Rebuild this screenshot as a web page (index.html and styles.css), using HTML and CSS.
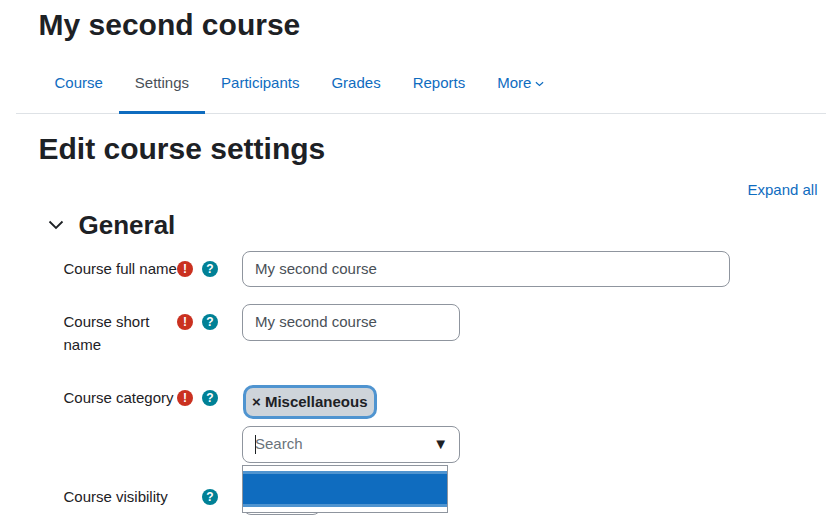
FILE: index.html
```html
<!DOCTYPE html>
<html lang="en">
<head>
<meta charset="utf-8">
<title>Edit course settings</title>
<link rel="stylesheet" href="styles.css">
</head>
<body>
<div class="page">
  <h1 class="course-title">My second course</h1>
  <nav class="tabs">
    <a class="tab" href="#">Course</a>
    <a class="tab active" href="#">Settings</a>
    <a class="tab" href="#">Participants</a>
    <a class="tab" href="#">Grades</a>
    <a class="tab" href="#">Reports</a>
    <a class="tab" href="#">More <svg class="caret" viewBox="0 0 10 6" width="9" height="6"><path d="M1 1l4 3.6L9 1" fill="none" stroke="currentColor" stroke-width="1.3"/></svg></a>
  </nav>
  <main class="content">
    <h2 class="page-title">Edit course settings</h2>
    <div class="expand-row"><a href="#">Expand all</a></div>
    <div class="section-head">
      <svg class="chevron" viewBox="0 0 16 10" width="16" height="10"><path d="M1.5 1.5L8 8l6.500-6.500" fill="none" stroke="#1d2125" stroke-width="1.800"/></svg>
      <h3 class="section-title">General</h3>
    </div>
    <div class="form-row row-full">
      <div class="label-col"><span class="label">Course full name</span><span class="icons"><span class="badge req">!</span><span class="badge help">?</span></span></div>
      <div class="field"><input class="text-input wide" value="My second course"></div>
    </div>
    <div class="form-row row-short">
      <div class="label-col"><span class="label">Course short name</span><span class="icons"><span class="badge req">!</span><span class="badge help">?</span></span></div>
      <div class="field"><input class="text-input narrow" value="My second course"></div>
    </div>
    <div class="form-row row-cat">
      <div class="label-col"><span class="label">Course category</span><span class="icons"><span class="badge req">!</span><span class="badge help">?</span></span></div>
      <div class="field">
        <div class="chip"><span class="chip-x">×</span> Miscellaneous</div>
        <div class="search-box"><span class="cursor"></span><span class="placeholder">Search</span><span class="arrow">▼</span></div>
        <div class="dropdown"><div class="option"></div></div>
      </div>
    </div>
    <div class="form-row row-vis">
      <div class="label-col"><span class="label">Course visibility</span><span class="icons"><span class="badge help">?</span></span></div>
      <div class="field"><div class="select-stub"></div></div>
    </div>
  </main>
</div>
</body>
</html>
```
FILE: styles.css
```css
html, body { margin: 0; padding: 0; height: 522px; overflow: hidden; background: #fff; }
body { font-family: "Liberation Sans", Arial, sans-serif; font-size: 15px; color: #1d2125; line-height: 22.5px; }
a { color: #0f6cbf; text-decoration: none; }
.page { padding: 0 8.5px 0 16px; }
.course-title { margin: 0; padding: 7px 0 0 22.5px; font-size: 30px; line-height: 36px; font-weight: 700; height: 36px; }
.tabs { display: flex; padding: 7px 0 0 22.5px; box-sizing: border-box; height: 71px; border-bottom: 1px solid #dee2e6; margin-right: -8.5px; align-items: flex-start; }
.tab { padding: 6px 16px 0; display: flex; align-items: center; gap: 4px; height: 64px; box-sizing: border-box; border-bottom: 3px solid transparent; }
.tab.active { color: #495057; border-bottom-color: #0f6cbf; }
.caret { margin-top: 1px; }
.content { padding-left: 22.5px; }
.page-title { margin: 0; padding-top: 17px; font-size: 30px; line-height: 36px; font-weight: 700; }
.expand-row { text-align: right; margin-top: 12px; height: 22px; }
.section-head { display: flex; align-items: center; margin-top: 6px; height: 36px; }
.chevron { margin-left: 9px; margin-right: 15px; }
.section-title { margin: 0; font-size: 26px; line-height: 32px; font-weight: 700; }
.form-row { display: flex; }
.label-col { width: 178.5px; margin-left: 25px; display: flex; justify-content: space-between; flex: none; position: relative; }
.label { display: block; width: 114px; }
.row-full .label, .row-cat .label, .row-vis .label { white-space: nowrap; }
.icons { position: absolute; left: 113.5px; top: 7px; display: flex; gap: 9px; width: 41px; justify-content: flex-end; }
.badge { width: 16px; height: 16px; margin-top: 3px; border-radius: 50%; color: #fff; font-weight: 700; font-size: 12px; line-height: 16px; text-align: center; flex: none; }
.req { background: #ca3120; }
.help { background: #008196; }
.field { position: relative; }
.text-input { display: block; height: 36px; box-sizing: border-box; border: 1px solid #8f959e; border-radius: 8px; padding: 0 12px 2px; font: inherit; color: #495057; background: #fff; }
.wide { width: 488px; }
.narrow { width: 218px; height: 37px; padding-bottom: 3px; }
.row-full { margin-top: 8px; height: 53px; }
.row-short { height: 81px; }
.row-full .label-col, .row-short .label-col { padding-top: 7px; }
.row-cat .label-col { padding-top: 2px; }
.row-cat .icons { top: 2px; }
.row-vis .label-col { padding-top: 6px; }
.row-vis .icons { top: 6px; }
.row-cat { height: 95px; }
.chip { display: inline-block; box-sizing: border-box; margin-left: 0.5px; height: 34px; line-height: 27px; padding: 0 6.5px; background: #ced4da; border: 3px solid #4f94d0; border-radius: 10px; font-weight: 700; color: #1d2125; vertical-align: top; }
.chip-x { font-size: 15px; }
.search-box { position: relative; display: flex; align-items: center; justify-content: space-between; box-sizing: border-box; width: 218px; height: 37px; margin-top: 7px; border: 1px solid #8f959e; border-radius: 8px; padding: 0 11px 0 12px; background: #fff; }
.placeholder { color: #6a737b; }
.cursor { position: absolute; left: 12px; top: 8px; width: 1px; height: 19px; background: #1d2125; }
.arrow { color: #1d2125; font-size: 15px; }
.dropdown { position: absolute; z-index: 2; left: 0; top: 80px; width: 206px; height: 48px; box-sizing: border-box; border: 1px solid #8f959e; background: #fff; padding: 5px 0 4px; }
.option { height: 36px; background: #0f6cbf; border-top: 3px solid #4f94d0; border-bottom: 3px solid #4f94d0; box-sizing: border-box; }
.row-vis { height: 40px; }
.select-stub { width: 78px; height: 36px; margin: -1px 0 0 1px; box-sizing: border-box; border: 1px solid #8f959e; border-radius: 8px; }
```
